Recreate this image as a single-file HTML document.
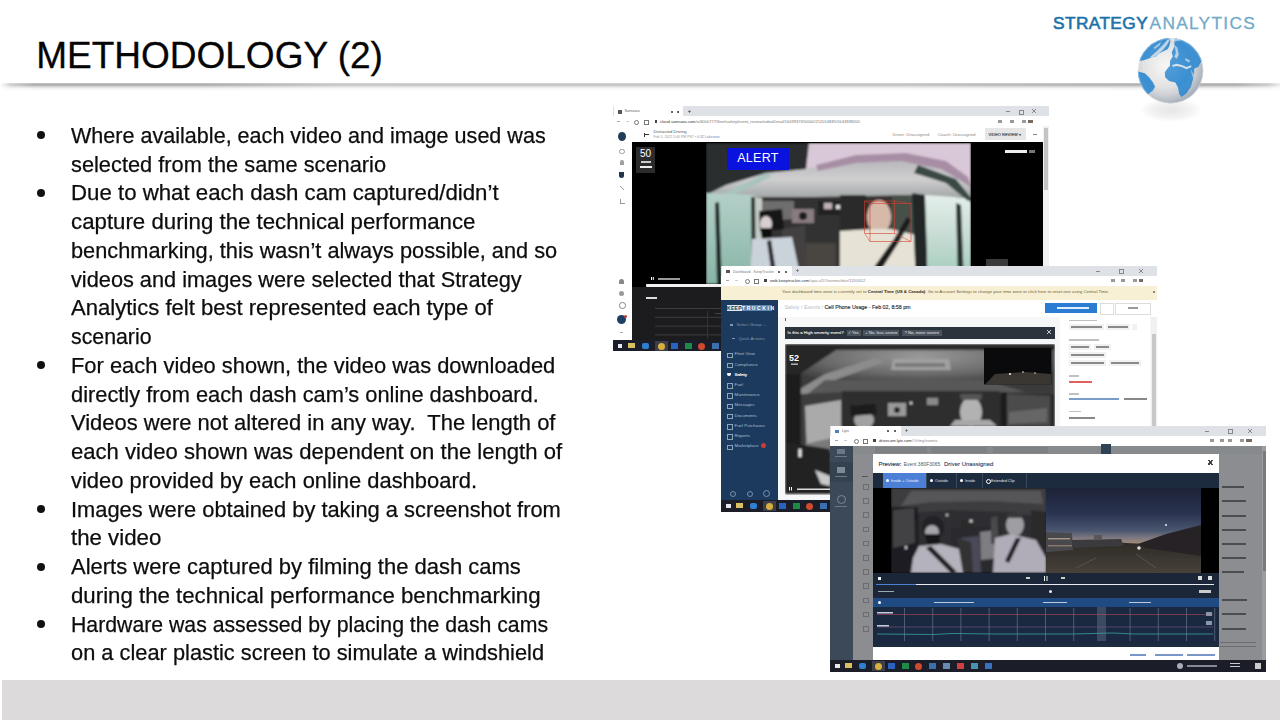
<!DOCTYPE html>
<html><head><meta charset="utf-8"><title>Methodology (2)</title>
<style>
html,body{margin:0;padding:0;width:1280px;height:720px;overflow:hidden;background:#fff;}
body{position:relative;font-family:"Liberation Sans",sans-serif;color:#000;}
.a{position:absolute;}
.ln{position:absolute;left:71.3px;font-size:21.5px;line-height:28.75px;height:28.75px;white-space:nowrap;transform-origin:0 0;color:#0d0d0d;-webkit-text-stroke:0.25px #0d0d0d;}
.bul{position:absolute;left:36.5px;width:8px;height:8px;border-radius:50%;background:#111;}
#title{position:absolute;left:36.2px;top:37.4px;font-size:37px;line-height:37px;white-space:nowrap;transform-origin:0 0;color:#050505;-webkit-text-stroke:0.3px #050505;}
#hdrline{position:absolute;left:0;top:83.3px;width:1280px;height:8px;}
#foot{position:absolute;left:2px;top:680px;width:1278px;height:40px;background:#dcdadb;}
#logo{position:absolute;left:1053px;top:13px;font-size:17.3px;line-height:20px;white-space:nowrap;}
</style></head><body>
<div id="hdrline"><svg width="1280" height="8" style="display:block"><defs>
<linearGradient id="hl" x1="0" x2="1280" y1="0" y2="0" gradientUnits="userSpaceOnUse">
<stop offset="0" stop-color="#000" stop-opacity="0"/>
<stop offset="0.008" stop-color="#000" stop-opacity="0.2"/>
<stop offset="0.027" stop-color="#000" stop-opacity="0.34"/>
<stop offset="0.16" stop-color="#000" stop-opacity="0.34"/>
<stop offset="0.26" stop-color="#000" stop-opacity="0.24"/>
<stop offset="0.70" stop-color="#000" stop-opacity="0.25"/>
<stop offset="0.78" stop-color="#000" stop-opacity="0.29"/>
<stop offset="0.86" stop-color="#000" stop-opacity="0.31"/>
<stop offset="0.965" stop-color="#000" stop-opacity="0.34"/>
<stop offset="0.99" stop-color="#000" stop-opacity="0.22"/>
<stop offset="1" stop-color="#000" stop-opacity="0.08"/>
</linearGradient>
<linearGradient id="hv" x1="0" x2="0" y1="0" y2="8" gradientUnits="userSpaceOnUse">
<stop offset="0" stop-color="#fff" stop-opacity="0.3"/>
<stop offset="0.1" stop-color="#fff" stop-opacity="1"/>
<stop offset="0.3" stop-color="#fff" stop-opacity="0.85"/>
<stop offset="0.5" stop-color="#fff" stop-opacity="0.4"/>
<stop offset="0.7" stop-color="#fff" stop-opacity="0.13"/>
<stop offset="1" stop-color="#fff" stop-opacity="0"/>
</linearGradient>
<mask id="hm"><rect x="0" y="0" width="1280" height="8" fill="url(#hv)"/></mask>
</defs><rect x="0" y="0" width="1280" height="8" fill="url(#hl)" mask="url(#hm)"/></svg></div>
<div id="title">METHODOLOGY (2)</div>
<div id="logo"><span style="color:#1b72a9;letter-spacing:0.4px;-webkit-text-stroke:0.6px #1b72a9">STRATEGY</span><span style="color:#72aac8;letter-spacing:1.3px;margin-left:1.5px;-webkit-text-stroke:0.3px #72aac8">ANALYTICS</span></div>
<!-- globe -->
<div class="a" style="left:1140px;top:100px;width:62px;height:22px;background:radial-gradient(ellipse at 50% 45%,rgba(0,0,0,0.10) 0%,rgba(0,0,0,0.05) 45%,rgba(0,0,0,0) 72%);"></div>
<svg class="a" style="left:1136px;top:36px" width="70" height="70" viewBox="0 0 720 720">
<defs>
<radialGradient id="gocean" cx="0.42" cy="0.42" r="0.6">
<stop offset="0" stop-color="#f6f5f4"/><stop offset="0.55" stop-color="#e2e2e3"/><stop offset="0.85" stop-color="#c6c9ce"/><stop offset="1" stop-color="#b8bdc4"/>
</radialGradient>
<radialGradient id="gshade" cx="0.42" cy="0.4" r="0.6">
<stop offset="0" stop-color="#fff" stop-opacity="0.15"/><stop offset="0.65" stop-color="#fff" stop-opacity="0"/><stop offset="1" stop-color="#123a66" stop-opacity="0.12"/>
</radialGradient>
<clipPath id="gclip"><circle cx="355" cy="358" r="337"/></clipPath>
</defs>
<circle cx="355" cy="358" r="337" fill="url(#gocean)"/>
<g clip-path="url(#gclip)" fill="#3a8fd2">
<path d="M0,0 L360,0 L352,60 L345,100 L325,135 L295,152 L262,168 L238,180 L210,208 L168,218 L118,236 L70,252 L0,262 Z"/>
<path d="M395,0 L720,0 L720,250 L668,268 L640,318 L600,335 L598,372 L588,440 L566,520 L520,590 L470,628 L445,600 L432,530 L405,478 L340,462 L300,425 L296,372 L328,330 L350,305 L350,255 L378,212 L368,168 L395,110 Z"/>
<path d="M0,360 L90,382 L132,422 L170,470 L196,520 L172,562 L132,592 L106,625 L0,640 Z"/>
</g>
<g clip-path="url(#gclip)" fill="#e6e9ec">
<path d="M372,298 L420,286 L470,298 L520,318 L565,300 L572,318 L520,342 L470,320 L420,308 L378,316 Z" opacity="0.9"/>
<path d="M140,222 L210,160 L270,100 L320,40 L352,30 L320,90 L280,140 L215,200 L170,222 Z" opacity="0.75"/>
<path d="M180,120 L230,80 L260,60 L240,100 L190,135 Z" opacity="0.6"/>
<path d="M395,90 L425,120 L440,190 L420,235 L395,215 L410,170 Z" opacity="0.7"/>
<path d="M330,0 L460,0 L450,45 L400,60 L350,50 Z" opacity="0.55"/>
<path d="M510,225 L560,255 L545,275 L505,250 Z" opacity="0.6"/>
<path d="M560,340 L600,400 L590,440 L570,380 Z" opacity="0.5"/>
</g>
<circle cx="355" cy="358" r="337" fill="url(#gshade)"/>
<circle cx="355" cy="358" r="332" fill="none" stroke="#ffffff" stroke-opacity="0.35" stroke-width="10"/>
</svg>
<!-- S1 -->
<div class="a" style="left:612.5px;top:106px;width:436px;height:245.5px;background:#fff;overflow:hidden;font-size:3px;color:#555">
  <div class="a" style="left:0;top:0;width:436px;height:10px;background:#dee1e6"></div>
  <div class="a" style="left:1.2px;top:0;width:69.8px;height:10px;background:#fff"></div>
  <div class="a" style="left:5px;top:4px;width:4px;height:4px;background:#555"></div>
  <div class="a" style="left:12px;top:2.8px;font-size:3.8px;line-height:5px;white-space:nowrap;color:#666">Samsara</div>
  <div class="a" style="left:58px;top:5px;width:2px;height:2px;background:#666"></div>
  <div class="a" style="left:64px;top:5px;width:2px;height:2px;background:#666"></div>
  <div class="a" style="left:75px;top:3.5px;width:3px;height:3px;border:0.8px solid #777;border-width:0 0 0 0;background:linear-gradient(#666,#666) center/3px 0.8px no-repeat,linear-gradient(#666,#666) center/0.8px 3px no-repeat"></div>
  <div class="a" style="left:393px;top:5px;width:4px;height:0.8px;background:#888"></div>
  <div class="a" style="left:406px;top:3.5px;width:3px;height:3px;border:0.8px solid #888"></div>
  <div class="a" style="left:419px;top:3px;width:4px;height:4px;background:linear-gradient(45deg,transparent 45%,#888 45%,#888 55%,transparent 55%),linear-gradient(-45deg,transparent 45%,#888 45%,#888 55%,transparent 55%)"></div>
  <!-- address row -->
  <div class="a" style="left:4px;top:15px;width:3px;height:1px;background:#aaa"></div>
  <div class="a" style="left:13px;top:15px;width:3px;height:1px;background:#ccc"></div>
  <div class="a" style="left:21px;top:13.5px;width:3px;height:3px;border:0.8px solid #777;border-radius:50%"></div>
  <div class="a" style="left:31px;top:13.5px;width:3px;height:3px;border:0.8px solid #777"></div>
  <div class="a" style="left:42px;top:14px;width:2.5px;height:3px;background:#444"></div>
  <div class="a" style="left:47.5px;top:12.6px;font-size:4.1px;line-height:6px;white-space:nowrap;color:#777"><span style="color:#333">cloud.samsara.com</span>/o/4000777/fleet/safety/event_review/videoDetail/1643937650000/212014885/1643938200</div>
  <div class="a" style="left:385px;top:14px;width:35px;height:3px;background:linear-gradient(90deg,#999 0 4px,transparent 4px 12px,#999 12px 16px,transparent 16px 24px,#999 24px 28px,transparent 28px 30px,#7a6a60 30px 35px)"></div>
  <!-- header -->
  <div class="a" style="left:31px;top:28px;width:5px;height:1px;background:#333"></div>
  <div class="a" style="left:31px;top:26.5px;width:2px;height:4px;border-left:1px solid #333"></div>
  <div class="a" style="left:41px;top:23.2px;font-size:4.2px;line-height:5px;white-space:nowrap;color:#555">Distracted Driving</div>
  <div class="a" style="left:41px;top:28.8px;font-size:3.5px;line-height:4.5px;white-space:nowrap;color:#999">Feb 3, 2022 5:40 PM PST &bull; <span style="color:#6a8ab8">4:32 Lakeview</span></div>
  <div class="a" style="left:280px;top:25.5px;font-size:4.3px;line-height:5px;white-space:nowrap;color:#888">Driver: Unassigned</div>
  <div class="a" style="left:325.5px;top:25.5px;font-size:4.3px;line-height:5px;white-space:nowrap;color:#888">Coach: Unassigned</div>
  <div class="a" style="left:372px;top:22px;width:41px;height:12px;background:#e6e6e6"></div>
  <div class="a" style="left:376px;top:25.5px;font-size:4px;line-height:5px;white-space:nowrap;color:#333;-webkit-text-stroke:0.1px #333">VIDEO REVIEW &#9662;</div>
  <div class="a" style="left:420px;top:27.5px;width:4px;height:1px;background:#888"></div>
  <!-- sidebar icons -->
  <div class="a" style="left:5px;top:25.5px;width:8px;height:9px;border-radius:50%;background:#1f3c58"></div>
  <div class="a" style="left:6.5px;top:42.5px;width:3.5px;height:3.5px;border:0.8px solid #999;border-radius:50%"></div>
  <div class="a" style="left:7px;top:54px;width:4px;height:5px;background:#a0a0a0;border-radius:2px 2px 0 0"></div>
  <div class="a" style="left:6.5px;top:66px;width:5px;height:6px;background:#22364c;border-radius:0 0 3px 3px"></div>
  <div class="a" style="left:7px;top:80px;width:4px;height:4px;background:linear-gradient(45deg,transparent 40%,#999 40%,#999 60%,transparent 60%)"></div>
  <div class="a" style="left:7px;top:92.5px;width:4px;height:4px;border-left:0.8px solid #999;border-bottom:0.8px solid #999"></div>
  <div class="a" style="left:6.5px;top:173px;width:5px;height:5px;background:#888;border-radius:50% 50% 0 0"></div>
  <div class="a" style="left:6.5px;top:185px;width:5px;height:5px;border-radius:50%;background:#999"></div>
  <div class="a" style="left:6.5px;top:196px;width:4.5px;height:4.5px;border-radius:50%;border:0.8px solid #888"></div>
  <div class="a" style="left:4.5px;top:209px;width:9px;height:9px;border-radius:50%;background:#1d3f66"></div>
  <div class="a" style="left:11px;top:208.5px;width:3px;height:3px;border-radius:50%;background:#c33"></div>
  <div class="a" style="left:7.5px;top:226px;width:3px;height:1px;background:#aaa"></div>
  <!-- video -->
  <div class="a" style="left:19px;top:36px;width:411.5px;height:145px;background:#000"></div>
  <div class="a" style="left:23.5px;top:41px;width:19px;height:26px;background:#2b2b2b"></div>
  <div class="a" style="left:25px;top:42px;width:16px;height:12px;color:#fff;font-size:10px;line-height:12px;text-align:center">50</div>
  <div class="a" style="left:28px;top:55px;width:10px;height:1.5px;background:#ccc"></div>
  <div class="a" style="left:27px;top:60px;width:12px;height:2px;background:#eee"></div>
  <svg class="a" style="left:93px;top:36.6px" width="265" height="141" viewBox="0 0 265 141">
    <defs><filter id="b1" x="-5%" y="-5%" width="110%" height="110%"><feGaussianBlur stdDeviation="0.9"/></filter>
    <linearGradient id="rw" x1="0" y1="0" x2="0" y2="1"><stop offset="0" stop-color="#e4eeea"/><stop offset="0.45" stop-color="#c8dcd4"/><stop offset="1" stop-color="#9ccab8"/></linearGradient>
    <linearGradient id="lw" x1="0" y1="0" x2="0" y2="1"><stop offset="0" stop-color="#b4d0c8"/><stop offset="1" stop-color="#88b4a6"/></linearGradient>
    <linearGradient id="cl" x1="0" y1="0" x2="0" y2="1"><stop offset="0" stop-color="#b8b8bc"/><stop offset="0.5" stop-color="#cfcfd0"/><stop offset="1" stop-color="#a4a8a8"/></linearGradient></defs>
    <g filter="url(#b1)">
    <rect x="0" y="0" width="265" height="141" fill="#343434"/>
    <rect x="0" y="18" width="265" height="36" fill="url(#cl)"/>
    <path d="M100,0 L265,0 L265,40 L240,22 L200,14 L150,16 L110,24 L95,26 Z" fill="#d9c9d8"/>
    <path d="M110,22 L150,12 L200,10 L240,18 L262,34 L265,44 L235,26 L195,18 L150,20 L112,28 Z" fill="#a88ea4"/>
    <path d="M0,0 L103,0 L100,26 L60,30 L20,42 L0,52 Z" fill="#2c2e2e"/>
    <path d="M17,51 L60,30 L66,33 L24,54 Z" fill="#a8c4bc"/>
    <path d="M0,50 L48,52 L48,141 L0,141 Z" fill="url(#lw)"/>
    <path d="M9,60 L13,59 L16,141 L11,141 Z" fill="#1e2826"/>
    <path d="M45,54 L49,54 L50,141 L46,141 Z" fill="#2a302e"/>
    <path d="M49,54 L56,55 L56,141 L50,141 Z" fill="#c4ccc6"/>
    <path d="M56,55 L212,52 L212,141 L56,141 Z" fill="#333131"/>
    <path d="M56,58 L88,58 L88,76 L56,78 Z" fill="#6e6e6e"/>
    <rect x="86" y="66" width="22" height="14" fill="#8a7c80"/>
    <circle cx="97" cy="73" r="4" fill="#1a1a1a"/>
    <path d="M112,58 L134,58 L134,72 L112,72 Z" fill="#222"/>
    <rect x="118" y="60" width="8" height="6" fill="#c0b0b4"/>
    <rect x="130" y="62" width="4" height="4" fill="#ddd"/>
    <path d="M76,86 L99,82 L101,141 L76,141 Z" fill="#424040"/>
    <path d="M100,100 L130,100 L130,141 L100,141 Z" fill="#4a4440"/>
    <path d="M53,68 L76,66 L78,86 L54,88 Z" fill="#151515"/>
    <ellipse cx="60" cy="81" rx="6" ry="8" fill="#d8cfcf"/>
    <path d="M54,85 L66,85 L65,96 L56,96 Z" fill="#0e0e0e"/>
    <path d="M46,96 L86,94 L96,141 L44,141 Z" fill="#cad2da"/>
    <path d="M61,98 L65,97 L72,141 L67,141 Z" fill="#262629"/>
    <path d="M134,52 L160,52 L160,88 L134,88 Z" fill="#2a2a2a"/>
    <path d="M185,52 L212,52 L212,92 L185,92 Z" fill="#465048"/>
    <path d="M160,54 L186,54 L186,62 L160,62 Z" fill="#3a3030"/>
    <ellipse cx="173" cy="74" rx="12" ry="17" fill="#d6b9a8"/>
    <path d="M134,88 L165,86 L185,86 L210,92 L225,120 L226,141 L134,141 Z" fill="#e6e2d6"/>
    <path d="M156,141 L188,96 L201,74 L205,77 L193,99 L166,141 Z" fill="#1c1c1c"/>
    <path d="M206,50 L219,52 L222,141 L210,141 Z" fill="#222826"/>
    <path d="M219,52 L262,55 L265,60 L265,141 L222,141 Z" fill="url(#rw)"/>
    <path d="M250,60 L255,62 L258,141 L252,141 Z" fill="#2a3230"/>
    <path d="M212,22 L250,36 L265,55 L262,58 L240,40 L208,30 Z" fill="#3a4844"/>
    </g>
    <rect x="158.7" y="58" width="30" height="32.4" fill="none" stroke="#d8402f" stroke-width="0.6"/>
    <rect x="164" y="60.6" width="41" height="38" fill="none" stroke="#d8402f" stroke-width="0.6"/>
    <path d="M158.7,58 L164,60.6 M188.7,58 L205,60.6 M158.7,90.4 L164,98.6 M188.7,90.4 L205,98.6" stroke="#d8402f" stroke-width="0.5" fill="none"/>
  </svg>
  <div class="a" style="left:114.5px;top:42.4px;width:62px;height:21.3px;background:#0a12e0;color:#fff;font-size:12.5px;line-height:21.3px;text-align:center;letter-spacing:0.3px">ALERT</div>
  <div class="a" style="left:392px;top:44px;width:22px;height:2.5px;background:#eee"></div>
  <div class="a" style="left:416px;top:44px;width:6px;height:2.5px;background:#777"></div>
  <div class="a" style="left:373.5px;top:152.8px;width:22px;height:9px;background:#3a3a3a"></div>
  <div class="a" style="left:38px;top:171px;width:1px;height:3px;background:#fff;box-shadow:1.8px 0 0 #fff"></div>
  <div class="a" style="left:45px;top:171.5px;width:22px;height:2px;background:#999"></div>
  <div class="a" style="left:33px;top:178.3px;width:320px;height:2.5px;background:#f2f2f2;border-radius:1px"></div>
  <!-- speed panel -->
  <div class="a" style="left:19px;top:181px;width:411.5px;height:53.3px;background:#1c1c1f"></div>
  <div class="a" style="left:33px;top:190.5px;width:11px;height:2px;background:#ddd"></div>
  <div class="a" style="left:42px;top:201.7px;width:380px;height:0.6px;background:#3c3c40;box-shadow:0 8.8px 0 #3c3c40,0 17.6px 0 #3c3c40,0 26.4px 0 #3c3c40"></div>
  <div class="a" style="left:102px;top:207px;width:320px;height:0.8px;background:#35495e"></div>
  <div class="a" style="left:94px;top:205px;width:0.6px;height:28px;background:#333"></div>
  <div class="a" style="left:106px;top:236px;width:10px;height:1px;background:#666"></div>
  <!-- scrollbar -->
  <div class="a" style="left:430.5px;top:20px;width:5.5px;height:214px;background:#f1f1f1"></div>
  <div class="a" style="left:431.5px;top:22px;width:3.5px;height:62px;background:#c4c4c4"></div>
  <!-- taskbar -->
  <div class="a" style="left:0;top:234.3px;width:436px;height:11.2px;background:#1b1d29"></div>
  <div class="a" style="left:5px;top:237.5px;width:4.5px;height:4.5px;background:#e8e8f0"></div>
  <div class="a" style="left:15px;top:237px;width:7px;height:5px;background:#d9c060"></div>
  <div class="a" style="left:29px;top:237px;width:7px;height:6px;background:#2f7fd0;border-radius:2px"></div>
  <div class="a" style="left:42px;top:235px;width:13px;height:10px;background:#3e3e48"></div>
  <div class="a" style="left:45px;top:237px;width:7px;height:7px;border-radius:50%;background:#d8b040"></div>
  <div class="a" style="left:58px;top:237px;width:7px;height:6px;background:#2a62c0"></div>
  <div class="a" style="left:72px;top:237px;width:7px;height:6px;background:#1e8a48"></div>
  <div class="a" style="left:85px;top:237px;width:7px;height:7px;border-radius:50%;background:#d04a30"></div>
  <div class="a" style="left:99px;top:237px;width:7px;height:6px;background:#3a6fb0"></div>
</div>
<!-- S2 -->
<div class="a" style="left:721px;top:266.3px;width:436.4px;height:245.4px;background:#f6f7f9;overflow:hidden">
  <div class="a" style="left:0;top:0;width:437px;height:9.5px;background:#dee1e6"></div>
  <div class="a" style="left:1.2px;top:0;width:69.8px;height:9.5px;background:#fff"></div>
  <div class="a" style="left:5px;top:3.5px;width:3.5px;height:3.5px;background:#555"></div>
  <div class="a" style="left:12px;top:2.5px;font-size:3.6px;line-height:6px;white-space:nowrap;color:#777">Dashboard - KeepTruckin</div>
  <div class="a" style="left:57px;top:4.3px;width:2px;height:2px;background:#666"></div>
  <div class="a" style="left:64px;top:4.3px;width:2px;height:2px;background:#666"></div>
  <div class="a" style="left:75px;top:3px;width:3px;height:3px;background:linear-gradient(#777,#777) center/3px 0.8px no-repeat,linear-gradient(#777,#777) center/0.8px 3px no-repeat"></div>
  <div class="a" style="left:375px;top:4.5px;width:4px;height:0.8px;background:#888"></div>
  <div class="a" style="left:398px;top:3px;width:3px;height:3px;border:0.8px solid #888"></div>
  <div class="a" style="left:418px;top:3px;width:4px;height:4px;background:linear-gradient(45deg,transparent 45%,#888 45%,#888 55%,transparent 55%),linear-gradient(-45deg,transparent 45%,#888 45%,#888 55%,transparent 55%)"></div>
  <div class="a" style="left:0;top:9.5px;width:437px;height:10px;background:#fff"></div>
  <div class="a" style="left:5px;top:14px;width:3px;height:1px;background:#aaa"></div>
  <div class="a" style="left:14px;top:14px;width:3px;height:1px;background:#ccc"></div>
  <div class="a" style="left:24px;top:12.5px;width:3px;height:3px;border:0.8px solid #777;border-radius:50%"></div>
  <div class="a" style="left:33px;top:12.5px;width:3px;height:3px;border:0.8px solid #777"></div>
  <div class="a" style="left:43px;top:13px;width:2.5px;height:3px;background:#444"></div>
  <div class="a" style="left:49px;top:11.5px;font-size:4.2px;line-height:6px;white-space:nowrap;color:#888"><span style="color:#333">web.keeptruckin.com</span>/spa-v2/#/events/dvir/1200512</div>
  <div class="a" style="left:390px;top:12.5px;width:32px;height:3px;background:linear-gradient(90deg,#999 0 4px,transparent 4px 10px,#999 10px 14px,transparent 14px 22px,#999 22px 26px,transparent 26px 28px,#7a6a60 28px 32px)"></div>
  <!-- banner -->
  <div class="a" style="left:0;top:19.5px;width:437px;height:14px;background:#f8f0d4"></div>
  <div class="a" style="left:61px;top:23.2px;font-size:4.3px;line-height:6px;white-space:nowrap;color:#6a5c40;letter-spacing:0.02px">Your dashboard time zone is currently set to <b style="color:#2a2418">Central Time (US &amp; Canada)</b>. Go to Account Settings to change your time zone or click here to reset one using Central Time.</div>
  <div class="a" style="left:432px;top:25px;width:2px;height:2px;background:#888"></div>
  <!-- sidebar -->
  <div class="a" style="left:0;top:33.4px;width:56.5px;height:201px;background:#1b3a5d"></div>
  <div class="a" style="left:6px;top:38.5px;width:15px;height:6.5px;background:#dfe6ee"></div>
  <div class="a" style="left:21px;top:38.5px;width:30px;height:6.5px;background:#5f86b3"></div>
  <div class="a" style="left:6px;top:38.5px;width:15px;height:6.5px;font-size:5px;line-height:6.5px;text-align:center;color:#1b3a5d;font-weight:bold;letter-spacing:0.3px">KEEP</div>
  <div class="a" style="left:21px;top:38.5px;width:30px;height:6.5px;font-size:5px;line-height:6.5px;text-align:center;color:#fff;font-weight:bold;letter-spacing:1.6px">TRUCKIN</div>
  <div class="a" style="left:9px;top:57.5px;width:3px;height:2px;background:#7f97b0"></div>
  <div class="a" style="left:15.5px;top:55.7px;font-size:4.3px;line-height:5px;white-space:nowrap;color:#7f97b0">Select Group &#8964;</div>
  <div class="a" style="left:11px;top:71.5px;width:3px;height:0.8px;background:#7f97b0"></div>
  <div class="a" style="left:17.5px;top:69.7px;font-size:4.3px;line-height:5px;white-space:nowrap;color:#7f97b0">Quick Actions</div>
  <div class="a" style="left:6.3px;top:86.5px;width:3.3px;height:3.3px;border:0.6px solid #8ea4ba;"></div>
  <div class="a" style="left:13.5px;top:85.2px;font-size:4.4px;line-height:5px;white-space:nowrap;color:#a9bccf;">Fleet View</div>
  <div class="a" style="left:6.3px;top:96.7px;width:3.3px;height:3.3px;border:0.6px solid #8ea4ba;"></div>
  <div class="a" style="left:13.5px;top:95.4px;font-size:4.4px;line-height:5px;white-space:nowrap;color:#a9bccf;">Compliance</div>
  <div class="a" style="left:6.3px;top:106.9px;width:3.3px;height:3.3px;background:#fff;border-radius:1px 1px 3px 3px;"></div>
  <div class="a" style="left:13.5px;top:105.6px;font-size:4.4px;line-height:5px;white-space:nowrap;color:#ffffff;-webkit-text-stroke:0.15px #fff;">Safety</div>
  <div class="a" style="left:6.3px;top:117.2px;width:3.3px;height:3.3px;border:0.6px solid #8ea4ba;"></div>
  <div class="a" style="left:13.5px;top:115.9px;font-size:4.4px;line-height:5px;white-space:nowrap;color:#a9bccf;">Fuel</div>
  <div class="a" style="left:6.3px;top:127.2px;width:3.3px;height:3.3px;border:0.6px solid #8ea4ba;"></div>
  <div class="a" style="left:13.5px;top:125.9px;font-size:4.4px;line-height:5px;white-space:nowrap;color:#a9bccf;">Maintenance</div>
  <div class="a" style="left:6.3px;top:137.5px;width:3.3px;height:3.3px;border:0.6px solid #8ea4ba;"></div>
  <div class="a" style="left:13.5px;top:136.2px;font-size:4.4px;line-height:5px;white-space:nowrap;color:#a9bccf;">Messages</div>
  <div class="a" style="left:6.3px;top:147.8px;width:3.3px;height:3.3px;border:0.6px solid #8ea4ba;"></div>
  <div class="a" style="left:13.5px;top:146.5px;font-size:4.4px;line-height:5px;white-space:nowrap;color:#a9bccf;">Documents</div>
  <div class="a" style="left:6.3px;top:158.0px;width:3.3px;height:3.3px;border:0.6px solid #8ea4ba;"></div>
  <div class="a" style="left:13.5px;top:156.7px;font-size:4.4px;line-height:5px;white-space:nowrap;color:#a9bccf;">Fuel Purchases</div>
  <div class="a" style="left:6.3px;top:168.2px;width:3.3px;height:3.3px;border:0.6px solid #8ea4ba;"></div>
  <div class="a" style="left:13.5px;top:166.9px;font-size:4.4px;line-height:5px;white-space:nowrap;color:#a9bccf;">Reports</div>
  <div class="a" style="left:6.3px;top:178.5px;width:3.3px;height:3.3px;border:0.6px solid #8ea4ba;"></div>
  <div class="a" style="left:13.5px;top:177.2px;font-size:4.4px;line-height:5px;white-space:nowrap;color:#a9bccf;">Marketplace</div>
  <div class="a" style="left:40px;top:177px;width:5px;height:5px;border-radius:50%;background:#d03a3a"></div>
  <div class="a" style="left:9px;top:224.5px;width:4px;height:4px;border:0.8px solid #7a92aa;border-radius:50%"></div>
  <div class="a" style="left:26px;top:224.5px;width:4px;height:4px;border:0.8px solid #7a92aa;border-radius:50%"></div>
  <div class="a" style="left:42px;top:224px;width:5px;height:5px;border:0.8px solid #7a92aa;border-radius:50%"></div>
  <!-- header -->
  <div class="a" style="left:56.5px;top:33.4px;width:381px;height:17px;background:#fff"></div>
  <div class="a" style="left:63.5px;top:38px;font-size:5.3px;line-height:7px;white-space:nowrap;color:#b6bec8">Safety / Events / <span style="color:#26323e;-webkit-text-stroke:0.15px #26323e">Cell Phone Usage - Feb 02, 8:58 pm</span></div>
  <div class="a" style="left:324.4px;top:37px;width:51.3px;height:9.7px;background:#2a7cd3"></div>
  <div class="a" style="left:336px;top:40.7px;width:32px;height:2px;background:#dfeeff"></div>
  <div class="a" style="left:379px;top:37px;width:12px;height:9.5px;border:0.6px solid #ddd;background:#fff"></div>
  <div class="a" style="left:394px;top:37px;width:34px;height:9.5px;border:0.6px solid #ddd;background:#fff"></div>
  <div class="a" style="left:407px;top:40.5px;width:10px;height:2px;background:#999"></div>
  <div class="a" style="left:64px;top:51.5px;width:1.2px;height:3px;background:#c33"></div>
  <!-- question bar -->
  <div class="a" style="left:64px;top:60.7px;width:270.2px;height:11.8px;background:#2b333d"></div>
  <div class="a" style="left:66.5px;top:63.5px;font-size:4.4px;line-height:6px;white-space:nowrap;color:#eef0f3;-webkit-text-stroke:0.1px #eef0f3">Is this a High severity event?</div>
  <div class="a" style="left:125.5px;top:63.3px;width:14px;height:6.2px;background:#4a525c;color:#e8eaee;font-size:4.2px;line-height:6.2px;text-align:center;white-space:nowrap">&#10003; Yes</div>
  <div class="a" style="left:142.4px;top:63.3px;width:36px;height:6.2px;background:#4a525c;color:#e8eaee;font-size:4.2px;line-height:6.2px;text-align:center;white-space:nowrap">+ No, less severe</div>
  <div class="a" style="left:181px;top:63.3px;width:39.5px;height:6.2px;background:#4a525c;color:#e8eaee;font-size:4.2px;line-height:6.2px;text-align:center;white-space:nowrap">? No, more severe</div>
  <div class="a" style="left:326px;top:64px;width:4px;height:4px;background:linear-gradient(45deg,transparent 40%,#ccc 40%,#ccc 60%,transparent 60%),linear-gradient(-45deg,transparent 40%,#ccc 40%,#ccc 60%,transparent 60%)"></div>
  <!-- right panel -->
  <div class="a" style="left:339px;top:50.4px;width:90px;height:184px;background:#fff"></div>
  <div class="a" style="left:429.5px;top:50.4px;width:7px;height:184px;background:#f0f0f0"></div>
  <div class="a" style="left:431px;top:68px;width:4px;height:165px;background:#c8c8c8"></div>
  <div class="a" style="left:348px;top:53.5px;width:28px;height:1.3px;background:#c0c0c0"></div>
  <div class="a" style="left:348px;top:57.5px;width:35px;height:6px;background:#f0f1f3"></div>
  <div class="a" style="left:350px;top:59.8px;width:31px;height:1.6px;background:#8a8a8a"></div>
  <div class="a" style="left:385px;top:57.5px;width:24px;height:6px;background:#f0f1f3"></div>
  <div class="a" style="left:387px;top:59.8px;width:20px;height:1.6px;background:#8a8a8a"></div>
  <div class="a" style="left:411px;top:57.5px;width:5px;height:6px;background:#f0f1f3"></div>
  <div class="a" style="left:348px;top:73px;width:30px;height:1.3px;background:#c0c0c0"></div>
  <div class="a" style="left:348px;top:77.5px;width:22px;height:6px;background:#f0f1f3"></div>
  <div class="a" style="left:350px;top:79.8px;width:18px;height:1.6px;background:#8a8a8a"></div>
  <div class="a" style="left:373px;top:77.5px;width:17px;height:6px;background:#f0f1f3"></div>
  <div class="a" style="left:375px;top:79.8px;width:13px;height:1.6px;background:#8a8a8a"></div>
  <div class="a" style="left:348px;top:85.5px;width:37px;height:6px;background:#f0f1f3"></div>
  <div class="a" style="left:350px;top:87.8px;width:33px;height:1.6px;background:#8a8a8a"></div>
  <div class="a" style="left:348px;top:93.5px;width:37px;height:6px;background:#f0f1f3"></div>
  <div class="a" style="left:350px;top:95.8px;width:33px;height:1.6px;background:#8a8a8a"></div>
  <div class="a" style="left:388px;top:93.5px;width:32px;height:6px;background:#f0f1f3"></div>
  <div class="a" style="left:390px;top:95.8px;width:28px;height:1.6px;background:#8a8a8a"></div>
  <div class="a" style="left:348px;top:109px;width:10px;height:1.3px;background:#c0c0c0"></div>
  <div class="a" style="left:348px;top:114.5px;width:23px;height:2px;background:#e06060"></div>
  <div class="a" style="left:348px;top:127px;width:10px;height:1.3px;background:#c0c0c0"></div>
  <div class="a" style="left:348px;top:132px;width:50px;height:2px;background:#7a9cc8"></div>
  <div class="a" style="left:403px;top:132px;width:23px;height:2px;background:#888"></div>
  <div class="a" style="left:348px;top:144.5px;width:12px;height:1.3px;background:#c0c0c0"></div>
  <div class="a" style="left:348px;top:150.5px;width:26px;height:2px;background:#888"></div>
  <!-- video -->
  <svg class="a" style="left:64.3px;top:77.6px" width="269.3" height="151.5" viewBox="0 0 269.3 151.5" preserveAspectRatio="none">
    <defs><filter id="b2" x="-5%" y="-5%" width="110%" height="110%"><feGaussianBlur stdDeviation="1.1"/></filter>
    <radialGradient id="ceil" cx="0.5" cy="0.25" r="0.6"><stop offset="0" stop-color="#9a9a9a"/><stop offset="0.6" stop-color="#6a6a6a"/><stop offset="1" stop-color="#3a3a3a"/></radialGradient></defs>
    <g filter="url(#b2)">
    <rect width="270" height="150" fill="#2c2c2c"/>
    <rect x="0" y="0" width="270" height="50" fill="url(#ceil)"/>
    <rect x="0" y="0" width="270" height="6" fill="#2a2a2a"/>
    <path d="M0,0 L60,0 L30,20 L0,40 Z" fill="#262626"/>
    <path d="M10,48 L40,30 L90,14 L100,18 L50,36 L18,54 Z" fill="#8c8c8c"/>
    <path d="M108,15 L164,15 L166,26 L106,26 Z" fill="#a0a0a0"/>
    <path d="M110,19 L160,19 L160,23 L110,23 Z" fill="#7a7a7a"/>
    <path d="M40,36 L200,36 L240,48 L20,52 Z" fill="#585858"/>
    <path d="M0,30 L16,30 L16,150 L0,150 Z" fill="#1c1c1c"/>
    <path d="M16,50 L58,48 L58,150 L16,150 Z" fill="#3e3e3e"/>
    <path d="M20,62 L56,56 L56,100 L22,112 Z" fill="#aaaaaa"/>
    <path d="M20,100 L56,92 L56,104 L22,116 Z" fill="#7a7a7a"/>
    <path d="M0,98 L45,105 L45,150 L0,150 Z" fill="#222"/>
    <rect x="13.5" y="105" width="3" height="8" fill="#f0f0f0"/>
    <path d="M30,126 L45,132 L45,142 L36,140 Z" fill="#c8c8c8"/>
    <path d="M57,47 L215,47 L215,82 L57,82 Z" fill="#2e2e2e"/>
    <ellipse cx="79" cy="76" rx="10" ry="9" fill="#a2a2a2"/>
    <path d="M65,62 L90,60 L92,70 L66,72 Z" fill="#1a1a1a"/>
    <rect x="103" y="59" width="18" height="13" fill="#9a9a9a"/>
    <circle cx="112" cy="66" r="3" fill="#222"/>
    <rect x="142" y="54" width="11" height="7" fill="#8a8a8a"/>
    <circle cx="126" cy="59" r="1.5" fill="#ddd"/>
    <ellipse cx="186" cy="68" rx="11" ry="15" fill="#b2b2b2"/>
    <path d="M175,50 L197,50 L196,56 L176,56 Z" fill="#555"/>
    <path d="M165,82 L170,76 L205,76 L212,82 Z" fill="#a8a8a8"/>
    <path d="M216,48 L222,48 L222,82 L216,82 Z" fill="#1a1a1a"/>
    <path d="M222,50 L265,52 L265,82 L222,82 Z" fill="#4c4c4c"/>
    <path d="M224,68 L262,64 L262,78 L224,80 Z" fill="#666"/>
    </g>
    <rect x="199" y="3.9" width="67.4" height="36.5" fill="#0a0a0c"/>
    <path d="M200,40.4 L266,40.4 L266,30 L240,28 L210,30 Z" fill="#3a3632"/>
    <circle cx="225" cy="30" r="1" fill="#fff"/><circle cx="238" cy="28" r="0.8" fill="#eee"/><circle cx="250" cy="29" r="0.8" fill="#ddd"/>
    <text x="4" y="17" font-family="Liberation Sans" font-size="9" font-weight="bold" fill="#fff">52</text>
    <rect x="6" y="19.5" width="7" height="1.3" fill="#ccc"/>
    <rect x="4" y="143" width="1" height="3.5" fill="#fff"/><rect x="6" y="143" width="1" height="3.5" fill="#fff"/>
    <rect x="12" y="144.5" width="120" height="1.5" fill="#ddd"/>
  </svg>
  <!-- taskbar -->
  <div class="a" style="left:0;top:233.7px;width:437px;height:11.7px;background:#1b1d29"></div>
  <div class="a" style="left:5px;top:237.5px;width:4.5px;height:4.5px;background:#e8e8f0"></div>
  <div class="a" style="left:15px;top:237px;width:7px;height:5px;background:#d9c060"></div>
  <div class="a" style="left:29px;top:237px;width:7px;height:6px;background:#2f7fd0;border-radius:2px"></div>
  <div class="a" style="left:42px;top:235px;width:13px;height:10px;background:#3e3e48"></div>
  <div class="a" style="left:45px;top:237px;width:7px;height:7px;border-radius:50%;background:#d8b040"></div>
  <div class="a" style="left:58px;top:237px;width:7px;height:6px;background:#2a62c0"></div>
  <div class="a" style="left:72px;top:237px;width:7px;height:6px;background:#1e8a48"></div>
  <div class="a" style="left:85px;top:237px;width:7px;height:7px;border-radius:50%;background:#d04a30"></div>
  <div class="a" style="left:99px;top:237px;width:7px;height:6px;background:#3a6fb0"></div>
</div>
<!-- S3 -->
<div class="a" style="left:830px;top:425.5px;width:436.3px;height:246.2px;background:#8b8d90;overflow:hidden">
  <div class="a" style="left:0;top:0;width:437px;height:10.5px;background:#dee1e6"></div>
  <div class="a" style="left:1.2px;top:0;width:69.8px;height:10.5px;background:#fff"></div>
  <div class="a" style="left:5px;top:4px;width:3.5px;height:3.5px;background:#4a80c0"></div>
  <div class="a" style="left:12px;top:3px;font-size:3.8px;line-height:5px;white-space:nowrap;color:#666">Lytx</div>
  <div class="a" style="left:57px;top:4.8px;width:2px;height:2px;background:#666"></div>
  <div class="a" style="left:64px;top:4.8px;width:2px;height:2px;background:#666"></div>
  <div class="a" style="left:75px;top:3.5px;width:3px;height:3px;background:linear-gradient(#777,#777) center/3px 0.8px no-repeat,linear-gradient(#777,#777) center/0.8px 3px no-repeat"></div>
  <div class="a" style="left:375px;top:5px;width:4px;height:0.8px;background:#888"></div>
  <div class="a" style="left:398px;top:3.5px;width:3px;height:3px;border:0.8px solid #888"></div>
  <div class="a" style="left:418px;top:3.5px;width:4px;height:4px;background:linear-gradient(45deg,transparent 45%,#888 45%,#888 55%,transparent 55%),linear-gradient(-45deg,transparent 45%,#888 45%,#888 55%,transparent 55%)"></div>
  <div class="a" style="left:0;top:10.5px;width:437px;height:9.5px;background:#fff"></div>
  <div class="a" style="left:5px;top:14.5px;width:3px;height:1px;background:#aaa"></div>
  <div class="a" style="left:14px;top:14.5px;width:3px;height:1px;background:#ccc"></div>
  <div class="a" style="left:24px;top:13px;width:3px;height:3px;border:0.8px solid #777;border-radius:50%"></div>
  <div class="a" style="left:33px;top:13px;width:3px;height:3px;border:0.8px solid #777"></div>
  <div class="a" style="left:43px;top:13.5px;width:2.5px;height:3px;background:#444"></div>
  <div class="a" style="left:49px;top:12.3px;font-size:4.1px;line-height:6px;white-space:nowrap;color:#888"><span style="color:#333">drivecam.lytx.com</span>/#/r/my/events</div>
  <div class="a" style="left:380px;top:13px;width:42px;height:3px;background:linear-gradient(90deg,#999 0 4px,transparent 4px 10px,#999 10px 14px,transparent 14px 18px,#999 18px 22px,transparent 22px 30px,#999 30px 34px,transparent 34px 36px,#7a6a60 36px 42px)"></div>
  <!-- page under overlay -->
  <div class="a" style="left:0;top:20px;width:22.5px;height:214.5px;background:#3b4958"></div>
  <div class="a" style="left:7px;top:23px;width:8px;height:5px;background:#6a7888"></div>
  <div class="a" style="left:5px;top:30px;width:12px;height:1px;background:#6a7888"></div>
  <div class="a" style="left:0;top:36px;width:22.5px;height:20px;background:#34414f"></div>
  <div class="a" style="left:7px;top:41px;width:8px;height:6px;background:#7a8898"></div>
  <div class="a" style="left:5px;top:50px;width:12px;height:1px;background:#6a7888"></div>
  <div class="a" style="left:7px;top:69px;width:7px;height:7px;border:1px solid #7a8898;border-radius:50%"></div>
  <div class="a" style="left:5px;top:80px;width:12px;height:1px;background:#6a7888"></div>
  <div class="a" style="left:22.5px;top:20px;width:414px;height:8.5px;background:#878a8d"></div>
  <div class="a" style="left:45px;top:21.5px;width:52px;height:5.5px;background:#7e8184"></div>
  <div class="a" style="left:101px;top:21.5px;width:56px;height:5.5px;background:#7e8184"></div>
  <div class="a" style="left:163px;top:21.5px;width:55px;height:5.5px;background:#7e8184"></div>
  <div class="a" style="left:271px;top:18.5px;width:10px;height:9.5px;background:#2e4254"></div>
  <div class="a" style="left:33px;top:58.5px;width:3.5px;height:3.5px;border:0.6px solid #6a6c6f"></div><div class="a" style="left:33px;top:72.7px;width:3.5px;height:3.5px;border:0.6px solid #6a6c6f"></div><div class="a" style="left:33px;top:86.9px;width:3.5px;height:3.5px;border:0.6px solid #6a6c6f"></div><div class="a" style="left:33px;top:101.1px;width:3.5px;height:3.5px;border:0.6px solid #6a6c6f"></div><div class="a" style="left:33px;top:115.3px;width:3.5px;height:3.5px;border:0.6px solid #6a6c6f"></div><div class="a" style="left:33px;top:129.5px;width:3.5px;height:3.5px;border:0.6px solid #6a6c6f"></div><div class="a" style="left:33px;top:143.7px;width:3.5px;height:3.5px;border:0.6px solid #6a6c6f"></div><div class="a" style="left:33px;top:157.9px;width:3.5px;height:3.5px;border:0.6px solid #6a6c6f"></div><div class="a" style="left:33px;top:172.1px;width:3.5px;height:3.5px;border:0.6px solid #6a6c6f"></div><div class="a" style="left:33px;top:186.3px;width:3.5px;height:3.5px;border:0.6px solid #6a6c6f"></div><div class="a" style="left:33px;top:200.5px;width:3.5px;height:3.5px;border:0.6px solid #6a6c6f"></div><div class="a" style="left:32px;top:50px;width:6px;height:1.5px;background:#555"></div>
  <div class="a" style="left:391.5px;top:60.3px;width:22px;height:2px;background:#4a4c50"></div><div class="a" style="left:391.5px;top:74.8px;width:24px;height:2px;background:#4a4c50"></div><div class="a" style="left:391.5px;top:89.2px;width:24px;height:2px;background:#4a4c50"></div><div class="a" style="left:391.5px;top:103.0px;width:24px;height:2px;background:#4a4c50"></div><div class="a" style="left:391.5px;top:117.0px;width:24px;height:2px;background:#4a4c50"></div><div class="a" style="left:391.5px;top:131.5px;width:24px;height:2px;background:#4a4c50"></div><div class="a" style="left:391.5px;top:145.5px;width:22px;height:2px;background:#4a4c50"></div><div class="a" style="left:391.5px;top:173.3px;width:25px;height:2px;background:#4a4c50"></div><div class="a" style="left:391.5px;top:187.8px;width:24px;height:2px;background:#4a4c50"></div><div class="a" style="left:391.5px;top:202.0px;width:24px;height:2px;background:#4a4c50"></div>
  <div class="a" style="left:432px;top:20px;width:4.3px;height:214px;background:#9a9c9f"></div>
  <div class="a" style="left:432.5px;top:25px;width:3.3px;height:120px;background:#777a7e"></div>
  <div class="a" style="left:390px;top:216px;width:36px;height:1.5px;background:#6a6c70;box-shadow:0 4px 0 #6a6c70"></div>
  <!-- modal -->
  <div class="a" style="left:43px;top:28.8px;width:345.7px;height:206px;background:#fff"></div>
  <div class="a" style="left:48.5px;top:34px;font-size:6px;line-height:8px;white-space:nowrap;color:#22406a;-webkit-text-stroke:0.15px #22406a">Preview:</div>
  <div class="a" style="left:73.7px;top:34.5px;font-size:5px;line-height:8px;white-space:nowrap;color:#4a5a6a">Event 380F3065</div>
  <div class="a" style="left:114px;top:34px;font-size:6px;line-height:8px;white-space:nowrap;color:#22406a;-webkit-text-stroke:0.1px #22406a">Driver Unassigned</div>
  <div class="a" style="left:378px;top:34px;width:5px;height:5px;background:linear-gradient(45deg,transparent 40%,#444 40%,#444 60%,transparent 60%),linear-gradient(-45deg,transparent 40%,#444 40%,#444 60%,transparent 60%)"></div>
  <div class="a" style="left:43px;top:47.7px;width:345.7px;height:14.8px;background:#1d2b3e"></div>
  <div class="a" style="left:52.5px;top:47.7px;width:43px;height:14.8px;background:#4b80d6"></div>
  <div class="a" style="left:55.5px;top:53.2px;width:3.5px;height:3.5px;border-radius:50%;background:#fff"></div>
  <div class="a" style="left:61px;top:53.3px;font-size:3.8px;line-height:5px;white-space:nowrap;color:#eef3ff">Inside + Outside</div>
  <div class="a" style="left:96px;top:47.7px;width:0.6px;height:14.8px;background:#3a4a5e;box-shadow:30px 0 0 #3a4a5e,56px 0 0 #3a4a5e,100px 0 0 #3a4a5e"></div>
  <div class="a" style="left:99.5px;top:53.2px;width:3.5px;height:3.5px;border-radius:50%;background:#fff"></div>
  <div class="a" style="left:105px;top:53.3px;font-size:3.8px;line-height:5px;white-space:nowrap;color:#e0e6ee">Outside</div>
  <div class="a" style="left:129.5px;top:53.2px;width:3.5px;height:3.5px;border-radius:50%;background:#fff"></div>
  <div class="a" style="left:135px;top:53.3px;font-size:3.8px;line-height:5px;white-space:nowrap;color:#e0e6ee">Inside</div>
  <div class="a" style="left:156px;top:53px;width:3px;height:3px;border-radius:50%;border:0.6px solid #fff"></div>
  <div class="a" style="left:161px;top:53.3px;font-size:3.8px;line-height:5px;white-space:nowrap;color:#e0e6ee">Extended Clip</div>
  <!-- video area -->
  <div class="a" style="left:43px;top:62.5px;width:345.7px;height:85px;background:#000"></div>
  <svg class="a" style="left:60.6px;top:62.5px" width="155.6" height="85" viewBox="0 0 155.6 85">
    <defs><filter id="b3" x="-5%" y="-5%" width="110%" height="110%"><feGaussianBlur stdDeviation="0.9"/></filter></defs>
    <g filter="url(#b3)">
    <rect width="156" height="85" fill="#2e2e30"/>
    <path d="M0,0 L156,0 L156,30 L120,24 L60,22 L0,26 Z" fill="#3e3e40"/>
    <path d="M20,3 L150,3 L152,16 L100,13 L40,14 L10,18 Z" fill="#565658"/>
    <path d="M0,19 L27,19 L28,85 L0,85 Z" fill="#1e1e20"/>
    <path d="M2,22 L23,20 L24,55 L2,60 Z" fill="#424244"/>
    <rect x="14" y="58" width="2" height="3" fill="#ccc"/>
    <path d="M140,22 L156,24 L156,60 L140,62 Z" fill="#2a2a2c"/>
    <path d="M60,40 L110,38 L112,85 L60,85 Z" fill="#2c2c2e"/>
    <path d="M89,44 L106,42 L108,70 L90,72 Z" fill="#7e7e82"/>
    <path d="M70,50 L88,48 L90,85 L72,85 Z" fill="#4a4a58"/>
    <rect x="70" y="32" width="12" height="8" fill="#2a2a2a"/>
    <circle cx="80" cy="33" r="1.6" fill="#e0e0e0"/>
    <circle cx="56" cy="27" r="1.2" fill="#ccc"/>
    <ellipse cx="42" cy="40" rx="11" ry="12" fill="#242426"/>
    <ellipse cx="41" cy="44" rx="7" ry="7" fill="#a6a6aa"/>
    <path d="M34,46 L49,46 L48,56 L36,56 Z" fill="#141416"/>
    <path d="M28,58 L50,56 L72,62 L80,85 L20,85 L22,70 Z" fill="#b4b2bc"/>
    <path d="M35,60 L40,58 L66,84 L60,85 Z" fill="#1c1c1e"/>
    <path d="M66,50 L80,54 L82,85 L72,85 Z" fill="#333"/>
    <path d="M100,30 L106,28 L108,56 L100,56 Z" fill="#4a4a4c"/>
    <ellipse cx="124" cy="37" rx="9" ry="11" fill="#9e9ea2"/>
    <path d="M116,26 L132,26 L131,30 L117,30 Z" fill="#3a3a3a"/>
    <path d="M104,50 L120,46 L145,52 L155,70 L155,85 L102,85 Z" fill="#b0acb8"/>
    <path d="M125,50 L130,50 L118,75 L114,73 Z" fill="#1c1c1e"/>
    </g>
  </svg>
  <svg class="a" style="left:216.2px;top:62.5px" width="154.7" height="85" viewBox="0 0 154.7 85">
    <defs><linearGradient id="sky" x1="0" y1="0" x2="0" y2="1">
      <stop offset="0" stop-color="#1c2238"/><stop offset="0.3" stop-color="#2a3450"/><stop offset="0.5" stop-color="#4a5570"/><stop offset="0.58" stop-color="#7a7680"/><stop offset="0.64" stop-color="#9a8878"/></linearGradient>
      <linearGradient id="road" x1="0" y1="0" x2="0" y2="1"><stop offset="0" stop-color="#2e2b28"/><stop offset="1" stop-color="#474039"/></linearGradient>
      <filter id="b4" x="-5%" y="-5%" width="110%" height="110%"><feGaussianBlur stdDeviation="0.7"/></filter></defs>
    <rect width="155" height="85" fill="url(#sky)"/>
    <g filter="url(#b4)">
    <path d="M0,56 L60,54 L100,56 L155,58 L155,85 L0,85 Z" fill="url(#road)"/>
    <path d="M0,44 L26,45 L27,62 L0,64 Z" fill="#4a4a4e"/>
    <rect x="2" y="50" width="22" height="1.4" fill="#a89888"/>
    <rect x="2" y="57" width="24" height="1.4" fill="#8a7a6a"/>
    <path d="M26,52 L75,51 L78,58 L26,60 Z" fill="#3a3a3e"/>
    <rect x="48" y="47" width="8" height="5" fill="#5a5658"/>
    <path d="M92,56 L120,46 L155,37 L155,68 L100,60 Z" fill="#252427"/>
    <circle cx="93" cy="60" r="1.8" fill="#ddd"/>
    <circle cx="120" cy="37" r="1" fill="#eee"/>
    <path d="M30,80 L50,70 M110,80 L90,66" stroke="#6a6460" stroke-width="0.6"/>
    </g>
  </svg>
  <!-- controls -->
  <div class="a" style="left:43px;top:147.5px;width:345.7px;height:25px;background:#1b2638"></div>
  <div class="a" style="left:48px;top:151px;width:3px;height:3px;background:#fff"></div>
  <div class="a" style="left:195.5px;top:151.5px;width:4px;height:2px;background:#ccc;box-shadow:35px 0 0 #ccc"></div>
  <div class="a" style="left:214px;top:150px;width:1.2px;height:5px;background:#fff;box-shadow:2.5px 0 0 #fff"></div>
  <div class="a" style="left:368px;top:150px;width:4px;height:4px;background:#ddd;box-shadow:10px 0 0 #ddd"></div>
  <div class="a" style="left:46px;top:158.5px;width:338px;height:1.3px;background:#e8ecf2"></div>
  <div class="a" style="left:46px;top:158.3px;width:40px;height:1.6px;background:#4d7fd4"></div>
  <div class="a" style="left:48px;top:165px;width:16px;height:1.5px;background:#9aa"></div>
  <div class="a" style="left:218.5px;top:164px;width:3px;height:3px;border-radius:50%;background:#eee"></div>
  <div class="a" style="left:369px;top:164px;width:12px;height:3px;background:#ccc"></div>
  <div class="a" style="left:43px;top:172.5px;width:345.7px;height:9px;background:#1f4a82"></div>
  <div class="a" style="left:48px;top:175.5px;width:3px;height:3px;border-radius:50%;background:#fff"></div>
  <div class="a" style="left:104px;top:176.5px;width:40px;height:1.2px;background:#bcd"></div><div class="a" style="left:212.6px;top:176.5px;width:24px;height:1.2px;background:#bcd"></div>
  <div class="a" style="left:298.7px;top:176.5px;width:22px;height:1.2px;background:#bcd"></div>
  <!-- timeline -->
  <div class="a" style="left:43px;top:181.5px;width:345.7px;height:36px;background:#1a293f"></div>
  <svg class="a" style="left:43px;top:181.5px" width="345.7" height="36" viewBox="0 0 345.7 36">
    <rect x="224" y="0" width="9" height="34" fill="#3a4a60"/>
    <g stroke="#7888a0" stroke-width="0.55"><line x1="31.5" y1="1" x2="31.5" y2="34"/><line x1="59.7" y1="1" x2="59.7" y2="34"/><line x1="87.9" y1="1" x2="87.9" y2="34"/><line x1="116.1" y1="1" x2="116.1" y2="34"/><line x1="144.3" y1="1" x2="144.3" y2="34"/><line x1="172.5" y1="1" x2="172.5" y2="34"/><line x1="200.7" y1="1" x2="200.7" y2="34"/><line x1="257.1" y1="1" x2="257.1" y2="34"/><line x1="285.3" y1="1" x2="285.3" y2="34"/><line x1="313.5" y1="1" x2="313.5" y2="34"/><line x1="341.7" y1="1" x2="341.7" y2="34"/></g>
    <line x1="4" y1="7.5" x2="340" y2="7.5" stroke="#b04a5a" stroke-width="0.6"/>
    <line x1="4" y1="20" x2="340" y2="20" stroke="#7a5a8a" stroke-width="0.6"/>
    <path d="M4,27 L60,27.5 L80,26.5 L120,27 L200,27 L240,26 L260,27 L340,27" stroke="#3aa0a0" stroke-width="0.8" fill="none"/>
    <rect x="4" y="5" width="16" height="1.5" fill="#ccd"/><rect x="4" y="18" width="12" height="1.5" fill="#ccd"/>
    <rect x="333" y="5" width="6" height="4" fill="#8a96a8"/><rect x="333" y="14" width="6" height="4" fill="#8a96a8"/>
  </svg>
  <div class="a" style="left:43px;top:217.5px;width:345.7px;height:4px;background:#1d2b3e"></div>
  <div class="a" style="left:357px;top:228.5px;width:28px;height:1.6px;background:#7a96c8"></div>
  <div class="a" style="left:325px;top:228.5px;width:28px;height:1.6px;background:#7a96c8"></div>
  <div class="a" style="left:300px;top:228.5px;width:16px;height:1.6px;background:#7a96c8"></div>
  <!-- taskbar -->
  <div class="a" style="left:0;top:234.5px;width:437px;height:11.7px;background:#1b1d29"></div>
  <div class="a" style="left:5px;top:238px;width:4.5px;height:4.5px;background:#e8e8f0"></div>
  <div class="a" style="left:15px;top:237.5px;width:7px;height:5px;background:#d9c060"></div>
  <div class="a" style="left:29px;top:237.5px;width:7px;height:6px;background:#2f7fd0;border-radius:2px"></div>
  <div class="a" style="left:42px;top:235.5px;width:13px;height:10px;background:#3e3e48"></div>
  <div class="a" style="left:45px;top:237.5px;width:7px;height:7px;border-radius:50%;background:#d8b040"></div>
  <div class="a" style="left:58px;top:237.5px;width:7px;height:6px;background:#2a62c0"></div>
  <div class="a" style="left:72px;top:237.5px;width:7px;height:6px;background:#1e8a48"></div>
  <div class="a" style="left:85px;top:237.5px;width:7px;height:7px;border-radius:50%;background:#d04a30"></div>
  <div class="a" style="left:99px;top:237.5px;width:7px;height:6px;background:#3a6fb0"></div>
  <div class="a" style="left:113px;top:237.5px;width:7px;height:6px;background:#6a8ab0"></div>
  <div class="a" style="left:127px;top:237.5px;width:7px;height:6px;background:#d04040"></div>
  <div class="a" style="left:141px;top:237.5px;width:7px;height:6px;background:#4a90b0"></div>
  <div class="a" style="left:155px;top:237.5px;width:7px;height:6px;background:#3a70c0"></div>
  <div class="a" style="left:347px;top:237.5px;width:6px;height:6px;border-radius:50%;background:#aab"></div>
  <div class="a" style="left:357px;top:239px;width:30px;height:2px;background:#889"></div>
  <div class="a" style="left:400px;top:237px;width:10px;height:1.5px;background:#ccc;box-shadow:0 3px 0 #ccc"></div>
  <div class="a" style="left:425px;top:237.5px;width:6px;height:6px;background:#ccc"></div>
</div>

<div class="ln" style="top:121.90px;transform:scaleX(1.003)">Where available, each video and image used was</div>
<div class="bul" style="top:131.30px"></div>
<div class="ln" style="top:150.65px;transform:scaleX(1.014)">selected from the same scenario</div>
<div class="ln" style="top:179.40px;transform:scaleX(1.034)">Due to what each dash cam captured/didn’t</div>
<div class="bul" style="top:188.80px"></div>
<div class="ln" style="top:208.15px;transform:scaleX(1.035)">capture during the technical performance</div>
<div class="ln" style="top:236.90px;transform:scaleX(1.012)">benchmarking, this wasn’t always possible, and so</div>
<div class="ln" style="top:265.65px;transform:scaleX(1.011)">videos and images were selected that Strategy</div>
<div class="ln" style="top:294.40px;transform:scaleX(1.026)">Analytics felt best represented each type of</div>
<div class="ln" style="top:323.15px;transform:scaleX(0.991)">scenario</div>
<div class="ln" style="top:351.90px;transform:scaleX(1.018)">For each video shown, the video was downloaded</div>
<div class="bul" style="top:361.30px"></div>
<div class="ln" style="top:380.65px;transform:scaleX(1.015)">directly from each dash cam’s online dashboard.</div>
<div class="ln" style="top:409.40px;transform:scaleX(1.021)">Videos were not altered in any way.&nbsp; The length of</div>
<div class="ln" style="top:438.15px;transform:scaleX(1.027)">each video shown was dependent on the length of</div>
<div class="ln" style="top:466.90px;transform:scaleX(1.020)">video provided by each online dashboard.</div>
<div class="ln" style="top:495.65px;transform:scaleX(1.017)">Images were obtained by taking a screenshot from</div>
<div class="bul" style="top:505.05px"></div>
<div class="ln" style="top:524.40px;transform:scaleX(1.035)">the video</div>
<div class="ln" style="top:553.15px;transform:scaleX(1.023)">Alerts were captured by filming the dash cams</div>
<div class="bul" style="top:562.55px"></div>
<div class="ln" style="top:581.90px;transform:scaleX(1.034)">during the technical performance benchmarking</div>
<div class="ln" style="top:610.65px;transform:scaleX(0.988)">Hardware was assessed by placing the dash cams</div>
<div class="bul" style="top:620.05px"></div>
<div class="ln" style="top:639.40px;transform:scaleX(1.015)">on a clear plastic screen to simulate a windshield</div>
<div id="foot"></div>
</body></html>
